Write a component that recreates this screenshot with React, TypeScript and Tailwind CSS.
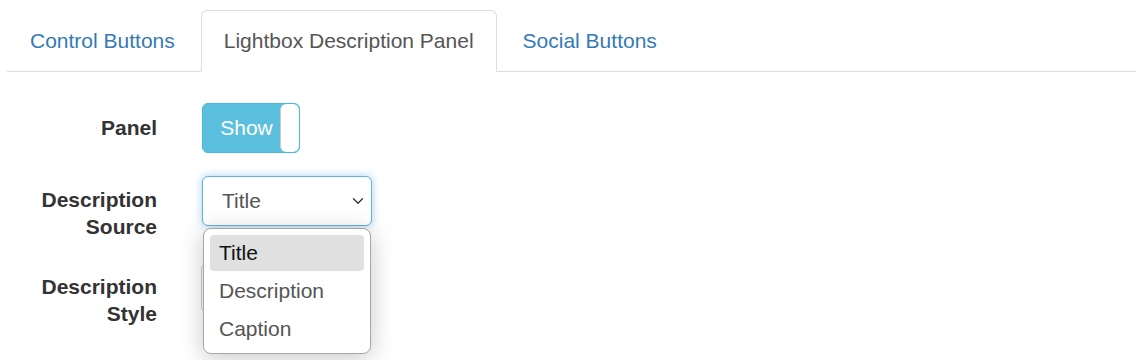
import React from 'react';
import { ChevronDown } from 'lucide-react';

const tabs = ['Control Buttons', 'Lightbox Description Panel', 'Social Buttons'];
const options = ['Title', 'Description', 'Caption'];

const App: React.FC = () => {
  const active = 1;

  return (
    <div className="w-[1142px] h-[360px] bg-white overflow-hidden font-['Liberation_Sans',Arial,sans-serif] text-[21px] text-[#333]">
      {/* Tabs */}
      <div className="ml-[7px] mr-[6px] pt-[10px] flex border-b border-[#ddd]">
        {tabs.map((t, i) => (
          <div
            key={t}
            className={
              i === active
                ? 'mr-[3px] -mb-px px-[22px] pt-[15px] pb-[14px] leading-[30px] bg-white text-[#555] border border-[#ddd] border-b-white rounded-t-[6px]'
                : 'mr-[3px] px-[22px] pt-[15px] pb-[14px] leading-[30px] text-[#337ab7] border border-transparent'
            }
          >
            {t}
          </div>
        ))}
      </div>

      {/* Form */}
      <div className="pt-[31px] flex flex-col gap-[23px]">
        <div className="flex items-start">
          <div className="w-[157px] text-right font-bold leading-[27px] pt-[11px]">Panel</div>
          <div className="ml-[45px]">
            <div className="w-[98px] h-[50px] flex rounded-[6px] border border-[#46b8da] bg-[#5bc0de] overflow-hidden">
              <div className="flex-1 flex items-center justify-center text-white pl-[10px]">Show</div>
              <div className="w-[19px] bg-white rounded-[6px] border-l border-[#ccc]"></div>
            </div>
          </div>
        </div>

        <div className="flex items-start">
          <div className="w-[157px] text-right font-bold leading-[27px] pt-[10px]">
            Description
            <br />
            Source
          </div>
          <div className="ml-[45px] relative">
            <div className="w-[170px] h-[50px] flex items-center justify-between pl-[19px] pr-[4px] rounded-[6px] border border-[#66afe9] bg-white text-[#555] shadow-[0_0_8px_rgba(102,175,233,0.6)]">
              <span>Title</span>
              <ChevronDown size={18} strokeWidth={1.75} className="text-[#333]" />
            </div>

            {/* Open dropdown */}
            <div className="absolute z-10 left-[1px] top-[52px] w-[168px] bg-white border border-[#a6a6a6] rounded-[8px] shadow-[0_4px_24px_rgba(0,0,0,0.22)] px-[6px] py-[6px]">
              {options.map((o, i) => (
                <div
                  key={o}
                  className={
                    i === 0
                      ? 'h-[36px] flex items-center pl-[9px] rounded-[4px] bg-[#e0e0e0] text-[#111]'
                      : 'h-[38px] flex items-center pl-[9px] pt-[2px] text-[#555]'
                  }
                >
                  {o}
                </div>
              ))}
            </div>
          </div>
        </div>

        <div className="flex items-start">
          <div className="w-[157px] text-right font-bold leading-[27px] pt-[10px]">
            Description
            <br />
            Style
          </div>
          <div className="ml-[44px]">
            <div className="w-[170px] h-[50px] rounded-[6px] border border-[#ccc] bg-white"></div>
          </div>
        </div>
      </div>
    </div>
  );
};

export default App;
